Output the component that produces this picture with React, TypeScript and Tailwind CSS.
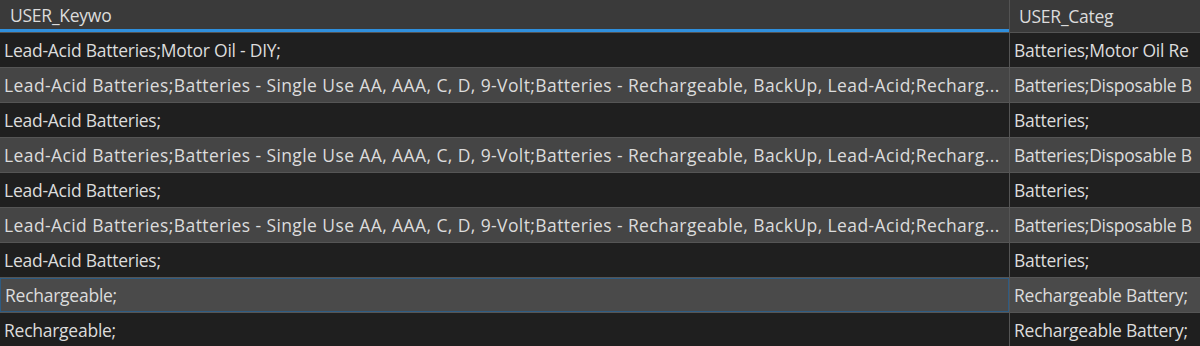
const LONG =
  "Lead-Acid Batteries;Batteries - Single Use AA, AAA, C, D, 9-Volt;Batteries - Rechargeable, BackUp, Lead-Acid;Recharg..."

const rows = [
  { kw: "Lead-Acid Batteries;Motor Oil - DIY;", cat: "Batteries;Motor Oil Re" },
  { kw: LONG, cat: "Batteries;Disposable B", wide: true },
  { kw: "Lead-Acid Batteries;", cat: "Batteries;" },
  { kw: LONG, cat: "Batteries;Disposable B", wide: true },
  { kw: "Lead-Acid Batteries;", cat: "Batteries;" },
  { kw: LONG, cat: "Batteries;Disposable B", wide: true },
  { kw: "Lead-Acid Batteries;", cat: "Batteries;" },
  { kw: "Rechargeable;", cat: "Rechargeable Battery;", selected: true },
  { kw: "Rechargeable;", cat: "Rechargeable Battery;" },
]

export default function App() {
  return (
    <div className="w-[1200px] h-[346px] overflow-hidden bg-[#2b2b2b] text-[#dcdcdc] text-[17.5px] tracking-[-0.25px] font-['Open_Sans',sans-serif]">
      {/* header */}
      <div className="flex h-[33px] bg-[#3a3a3a] border-b border-[#535353]">
        <div className="w-[1009px] shrink-0 flex items-center pl-[10px] border-b-[3px] border-[#2f8fdd] pt-[2px]">
          USER_Keywo
        </div>
        <div className="flex-1 flex items-center pl-[9px] border-l border-[#535353]">USER_Categ</div>
      </div>

      {rows.map((r, i) => {
        const bg = r.selected ? "bg-[#4a4a4a]" : i % 2 === 0 ? "bg-[#1f1f1f]" : "bg-[#454545]"
        return (
          <div key={i} className={`flex h-[35px] border-b border-[#555555] ${bg}`}>
            <div
              className={`w-[1009px] shrink-0 flex items-center pl-[4px] pr-[4px] overflow-hidden whitespace-nowrap ${
                r.selected ? "border border-[#2e5b82]" : ""
              } ${r.wide ? "tracking-[0.4px]" : ""}`}
            >
              {r.kw}
            </div>
            <div className="flex-1 flex items-center pl-[4px] border-l border-[#555555] overflow-hidden whitespace-nowrap">
              {r.cat}
            </div>
          </div>
        )
      })}
    </div>
  )
}
